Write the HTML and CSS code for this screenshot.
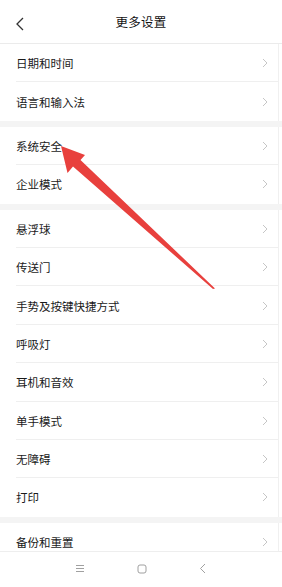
FILE: index.html
```html
<!DOCTYPE html>
<html lang="zh">
<head>
<meta charset="utf-8">
<link rel="stylesheet" href="styles.css">
</head>
<body>
<div class="screen">
  <header class="topbar">
    <svg class="back" width="10" height="14" viewBox="0 0 10 14"><polyline points="8,1 2,7 8,13" fill="none" stroke="#333" stroke-width="1.3"/></svg>
    <div class="title">更多设置</div>
  </header>
  <main class="content">
    <section class="group">
      <div class="row"><span>日期和时间</span><svg class="chev" width="6" height="10" viewBox="0 0 6 10"><polyline points="1,1 5,5 1,9" fill="none" stroke="#c6c6c6" stroke-width="1"/></svg></div>
      <div class="row last"><span>语言和输入法</span><svg class="chev" width="6" height="10" viewBox="0 0 6 10"><polyline points="1,1 5,5 1,9" fill="none" stroke="#c6c6c6" stroke-width="1"/></svg></div>
    </section>
    <div class="band"></div>
    <section class="group">
      <div class="row"><span>系统安全</span><svg class="chev" width="6" height="10" viewBox="0 0 6 10"><polyline points="1,1 5,5 1,9" fill="none" stroke="#c6c6c6" stroke-width="1"/></svg></div>
      <div class="row last"><span>企业模式</span><svg class="chev" width="6" height="10" viewBox="0 0 6 10"><polyline points="1,1 5,5 1,9" fill="none" stroke="#c6c6c6" stroke-width="1"/></svg></div>
    </section>
    <div class="band"></div>
    <section class="group">
      <div class="row"><span>悬浮球</span><svg class="chev" width="6" height="10" viewBox="0 0 6 10"><polyline points="1,1 5,5 1,9" fill="none" stroke="#c6c6c6" stroke-width="1"/></svg></div>
      <div class="row"><span>传送门</span><svg class="chev" width="6" height="10" viewBox="0 0 6 10"><polyline points="1,1 5,5 1,9" fill="none" stroke="#c6c6c6" stroke-width="1"/></svg></div>
      <div class="row"><span>手势及按键快捷方式</span><svg class="chev" width="6" height="10" viewBox="0 0 6 10"><polyline points="1,1 5,5 1,9" fill="none" stroke="#c6c6c6" stroke-width="1"/></svg></div>
      <div class="row"><span>呼吸灯</span><svg class="chev" width="6" height="10" viewBox="0 0 6 10"><polyline points="1,1 5,5 1,9" fill="none" stroke="#c6c6c6" stroke-width="1"/></svg></div>
      <div class="row"><span>耳机和音效</span><svg class="chev" width="6" height="10" viewBox="0 0 6 10"><polyline points="1,1 5,5 1,9" fill="none" stroke="#c6c6c6" stroke-width="1"/></svg></div>
      <div class="row"><span>单手模式</span><svg class="chev" width="6" height="10" viewBox="0 0 6 10"><polyline points="1,1 5,5 1,9" fill="none" stroke="#c6c6c6" stroke-width="1"/></svg></div>
      <div class="row"><span>无障碍</span><svg class="chev" width="6" height="10" viewBox="0 0 6 10"><polyline points="1,1 5,5 1,9" fill="none" stroke="#c6c6c6" stroke-width="1"/></svg></div>
      <div class="row last"><span>打印</span><svg class="chev" width="6" height="10" viewBox="0 0 6 10"><polyline points="1,1 5,5 1,9" fill="none" stroke="#c6c6c6" stroke-width="1"/></svg></div>
    </section>
    <div class="band"></div>
    <section class="group">
      <div class="row last"><span>备份和重置</span><svg class="chev" width="6" height="10" viewBox="0 0 6 10"><polyline points="1,1 5,5 1,9" fill="none" stroke="#c6c6c6" stroke-width="1"/></svg></div>
    </section>
  </main>
  <nav class="navbar">
    <svg width="10" height="9" viewBox="0 0 10 9"><path d="M1 1.5H9M1 4.5H9M1 7.5H9" stroke="#a0a0a0" stroke-width="1"/></svg>
    <svg width="10" height="10" viewBox="0 0 10 10"><rect x="1" y="1" width="8" height="8" rx="2" fill="none" stroke="#a0a0a0" stroke-width="1"/></svg>
    <svg width="8" height="11" viewBox="0 0 8 11"><polyline points="6,1 1.5,5.5 6,10" fill="none" stroke="#a0a0a0" stroke-width="1"/></svg>
  </nav>
  <svg class="arrow" width="282" height="587" viewBox="0 0 282 587">
    <polygon points="61,146 85,155 80.5,160 215,288.5 213,289 73,166.5 67.5,173" fill="#e8403d"/>
  </svg>
</div>
</body>
</html>
```
FILE: styles.css
```css
* { box-sizing: border-box; }
html, body { margin: 0; padding: 0; background: #fff; }
body {
  font-family: "Noto Sans CJK SC", "Noto Sans", sans-serif;
  color: #1a1a1a;
}
.screen {
  position: relative;
  width: 282px;
  height: 587px;
  display: flex;
  flex-direction: column;
  overflow: hidden;
  background: #fff;
}
.topbar {
  height: 44px;
  flex: 0 0 44px;
  display: flex;
  align-items: center;
  justify-content: center;
  position: relative;
  border-bottom: 1px solid #ebebeb;
}
.back { position: absolute; left: 15px; top: 17px; }
.title { font-size: 12.5px; color: #111; letter-spacing: 0.2px; }
.content {
  flex: 1 1 auto;
  overflow: hidden;
  display: flex;
  flex-direction: column;
}
.group {
  background: #fff;
  margin-right: 3px;
  border-right: 1px solid #f0f0f0;
}
.row {
  height: 38.4px;
  display: flex;
  align-items: center;
  justify-content: space-between;
  padding: 0 10px 0 16px;
  font-size: 11.5px;
  color: #1a1a1a;
  position: relative;
}
.row::after {
  content: "";
  position: absolute;
  left: 16px;
  right: 0;
  bottom: 0;
  height: 1px;
  background: #efefef;
}
.row.last::after { display: none; }
.band { height: 6px; flex: 0 0 6px; background: #f4f4f4; }
.navbar {
  flex: 0 0 36px;
  height: 36px;
  display: flex;
  align-items: center;
  justify-content: center;
  gap: 52px;
  border-top: 1px solid #eeeeee;
  background: #fff;
  padding-bottom: 2px;
}
.arrow { position: absolute; left: 0; top: 0; pointer-events: none; }
```
